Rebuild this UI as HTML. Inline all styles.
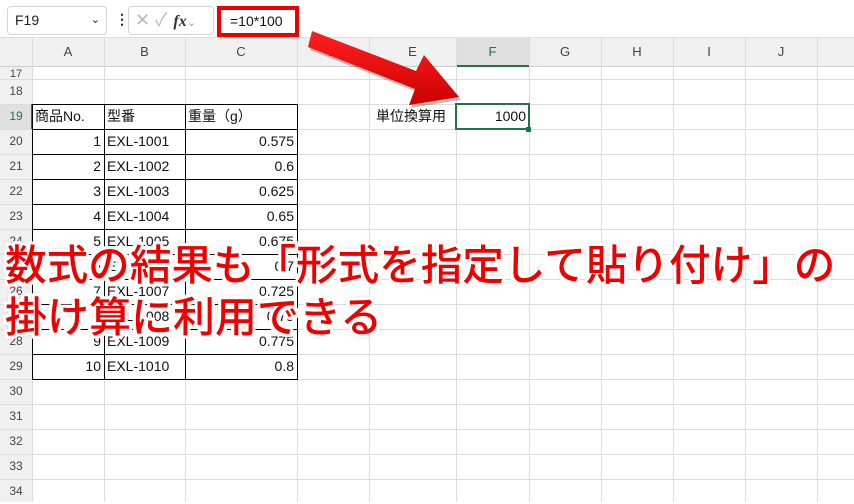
<!DOCTYPE html>
<html><head><meta charset="utf-8"><style>
*{margin:0;padding:0;box-sizing:border-box}
body{width:854px;height:502px;overflow:hidden;background:#fff;position:relative;font-family:"Liberation Sans","Noto Sans CJK JP",sans-serif;font-size:14px;color:#222}
.a{position:absolute}
.vl{position:absolute;top:37px;width:1px;height:465px;background:#dcdcdc}
.hl{position:absolute;left:0;width:854px;height:1px;background:#dcdcdc}
.ch{position:absolute;top:37px;height:30px;line-height:30px;text-align:center;font-size:13px;color:#444}
.rh{position:absolute;left:0;width:32px;text-align:center;font-size:12px;color:#444;height:25px;line-height:25px}
.c{position:absolute;height:25px;line-height:25px;font-size:14px;color:#111;white-space:nowrap;padding:0 3px}
.r{text-align:right}
.big{position:absolute;left:5px;font-size:42px;font-weight:500;color:#e00;white-space:nowrap;
text-shadow:-3px -3px 0 #fff,3px -3px 0 #fff,-3px 3px 0 #fff,3px 3px 0 #fff,0 3px 0 #fff,0 -3px 0 #fff,3px 0 0 #fff,-3px 0 0 #fff,0 0 6px rgba(0,0,0,.5);transform-origin:left top}
</style></head><body>
<div class="a" style="left:0;top:0;width:854px;height:37px;background:#fff"></div>
<div class="a" style="left:7px;top:6px;width:100px;height:29px;border:1px solid #d4d4d4;border-radius:4px;font-size:14px;line-height:27px;padding-left:7px">F19<span style="position:absolute;right:6px;top:0;font-size:11px">&#8964;</span></div>
<div class="a" style="left:115px;top:9px;font-size:14px;line-height:20px;font-weight:bold">&#8942;</div>
<div class="a" style="left:128px;top:6px;width:86px;height:29px;border:1px solid #d4d4d4;border-radius:4px;color:#bbb;font-size:18px;line-height:27px;padding-left:6px">&#x2715;&nbsp;&#x2713;<span style="color:#333;font-family:'Liberation Serif',serif;font-style:italic;font-size:16px;font-weight:bold;margin-left:6px">fx</span><span style="font-size:11px;color:#999">&#8964;</span></div>
<div class="a" style="left:217px;top:6px;width:82px;height:31px;border:4px solid #e00;background:#fff;font-size:14px;line-height:23px;padding-left:9px;color:#111">=10*100</div>
<div class="a" style="left:0;top:37px;width:854px;height:30px;background:#f0f0f0;border-top:1px solid #ddd;border-bottom:1px solid #ccc"></div>
<div class="a" style="left:456px;top:37px;width:73px;height:30px;background:#e0e0e0;border-bottom:2px solid #217346"></div>
<div class="a" style="left:0;top:67px;width:32px;height:435px;background:#f0f0f0"></div>
<div class="a" style="left:0;top:104px;width:32px;height:25px;background:#e0e0e0"></div>
<div class="hl" style="top:79px"></div><div class="hl" style="top:104px"></div><div class="hl" style="top:129px"></div><div class="hl" style="top:154px"></div><div class="hl" style="top:179px"></div><div class="hl" style="top:204px"></div><div class="hl" style="top:229px"></div><div class="hl" style="top:254px"></div><div class="hl" style="top:279px"></div><div class="hl" style="top:304px"></div><div class="hl" style="top:329px"></div><div class="hl" style="top:354px"></div><div class="hl" style="top:379px"></div><div class="hl" style="top:404px"></div><div class="hl" style="top:429px"></div><div class="hl" style="top:454px"></div><div class="hl" style="top:479px"></div>
<div class="vl" style="left:32px"></div><div class="vl" style="left:104px"></div><div class="vl" style="left:185px"></div><div class="vl" style="left:297px"></div><div class="vl" style="left:369px"></div><div class="vl" style="left:456px"></div><div class="vl" style="left:529px"></div><div class="vl" style="left:601px"></div><div class="vl" style="left:673px"></div><div class="vl" style="left:745px"></div><div class="vl" style="left:817px"></div>
<div class="ch" style="left:32px;width:72px">A</div><div class="ch" style="left:104px;width:81px">B</div><div class="ch" style="left:185px;width:112px">C</div><div class="ch" style="left:297px;width:72px">D</div><div class="ch" style="left:369px;width:87px">E</div><div class="ch" style="left:456px;width:73px;color:#217346">F</div><div class="ch" style="left:529px;width:72px">G</div><div class="ch" style="left:601px;width:72px">H</div><div class="ch" style="left:673px;width:72px">I</div><div class="ch" style="left:745px;width:72px">J</div>
<div class="rh" style="top:62px;font-size:11px">17</div><div class="rh" style="top:79px">18</div><div class="rh" style="top:104px;color:#217346">19</div><div class="rh" style="top:129px">20</div><div class="rh" style="top:154px">21</div><div class="rh" style="top:179px">22</div><div class="rh" style="top:204px">23</div><div class="rh" style="top:229px">24</div><div class="rh" style="top:254px">25</div><div class="rh" style="top:279px">26</div><div class="rh" style="top:304px">27</div><div class="rh" style="top:329px">28</div><div class="rh" style="top:354px">29</div><div class="rh" style="top:379px">30</div><div class="rh" style="top:404px">31</div><div class="rh" style="top:429px">32</div><div class="rh" style="top:454px">33</div><div class="rh" style="top:479px">34</div>
<div class="a" style="left:31px;top:104px;width:2px;height:25px;background:#217346"></div>
<div class="a" style="left:32px;top:104px;width:266px;height:276px;border:1px solid #000"></div>
<div class="a" style="left:104px;top:104px;width:1px;height:276px;background:#000"></div>
<div class="a" style="left:185px;top:104px;width:1px;height:276px;background:#000"></div>
<div class="a" style="left:32px;top:129px;width:266px;height:1px;background:#000"></div><div class="a" style="left:32px;top:154px;width:266px;height:1px;background:#000"></div><div class="a" style="left:32px;top:179px;width:266px;height:1px;background:#000"></div><div class="a" style="left:32px;top:204px;width:266px;height:1px;background:#000"></div><div class="a" style="left:32px;top:229px;width:266px;height:1px;background:#000"></div><div class="a" style="left:32px;top:254px;width:266px;height:1px;background:#000"></div><div class="a" style="left:32px;top:279px;width:266px;height:1px;background:#000"></div><div class="a" style="left:32px;top:304px;width:266px;height:1px;background:#000"></div><div class="a" style="left:32px;top:329px;width:266px;height:1px;background:#000"></div><div class="a" style="left:32px;top:354px;width:266px;height:1px;background:#000"></div>
<div class="c" style="left:32px;top:104px">商品No.</div><div class="c" style="left:104px;top:104px">型番</div><div class="c" style="left:185px;top:104px">重量（g）</div>
<div class="c" style="left:369px;top:104px;width:87px;text-align:right;padding-right:10px">単位換算用</div>
<div class="c r" style="left:32px;top:129px;width:72px">1</div><div class="c" style="left:104px;top:129px">EXL-1001</div><div class="c r" style="left:185px;top:129px;width:112px">0.575</div>
<div class="c r" style="left:32px;top:154px;width:72px">2</div><div class="c" style="left:104px;top:154px">EXL-1002</div><div class="c r" style="left:185px;top:154px;width:112px">0.6</div>
<div class="c r" style="left:32px;top:179px;width:72px">3</div><div class="c" style="left:104px;top:179px">EXL-1003</div><div class="c r" style="left:185px;top:179px;width:112px">0.625</div>
<div class="c r" style="left:32px;top:204px;width:72px">4</div><div class="c" style="left:104px;top:204px">EXL-1004</div><div class="c r" style="left:185px;top:204px;width:112px">0.65</div>
<div class="c r" style="left:32px;top:229px;width:72px">5</div><div class="c" style="left:104px;top:229px">EXL-1005</div><div class="c r" style="left:185px;top:229px;width:112px">0.675</div>
<div class="c r" style="left:32px;top:254px;width:72px">6</div><div class="c" style="left:104px;top:254px">EXL-1006</div><div class="c r" style="left:185px;top:254px;width:112px">0.7</div>
<div class="c r" style="left:32px;top:279px;width:72px">7</div><div class="c" style="left:104px;top:279px">EXL-1007</div><div class="c r" style="left:185px;top:279px;width:112px">0.725</div>
<div class="c r" style="left:32px;top:304px;width:72px">8</div><div class="c" style="left:104px;top:304px">EXL-1008</div><div class="c r" style="left:185px;top:304px;width:112px">0.75</div>
<div class="c r" style="left:32px;top:329px;width:72px">9</div><div class="c" style="left:104px;top:329px">EXL-1009</div><div class="c r" style="left:185px;top:329px;width:112px">0.775</div>
<div class="c r" style="left:32px;top:354px;width:72px">10</div><div class="c" style="left:104px;top:354px">EXL-1010</div><div class="c r" style="left:185px;top:354px;width:112px">0.8</div>
<div class="a" style="left:455px;top:103px;width:75px;height:27px;border:2px solid #217346"></div>
<div class="c r" style="left:456px;top:104px;width:73px">1000</div>
<div class="a" style="left:526px;top:127px;width:5px;height:5px;background:#217346"></div>
<svg class="a" style="left:0;top:0" width="854" height="502"><defs><linearGradient id="g" x1="0" y1="0" x2="0" y2="1"><stop offset="0" stop-color="#ff2020"/><stop offset="1" stop-color="#c00"/></linearGradient></defs>
<polygon points="312,31 416,71 424,55 459,97 409,105 415,89 308,47" fill="#000" opacity=".25" transform="translate(2,3)"/>
<polygon points="312,31 416,71 424,55 459,97 409,105 415,89 308,47" fill="url(#g)"/></svg>
<div class="big" style="top:232px;transform:scaleX(0.99)">数式の結果も「形式を指定して貼り付け」の</div>
<div class="big" style="top:284px">掛け算に利用できる</div>
</body></html>
